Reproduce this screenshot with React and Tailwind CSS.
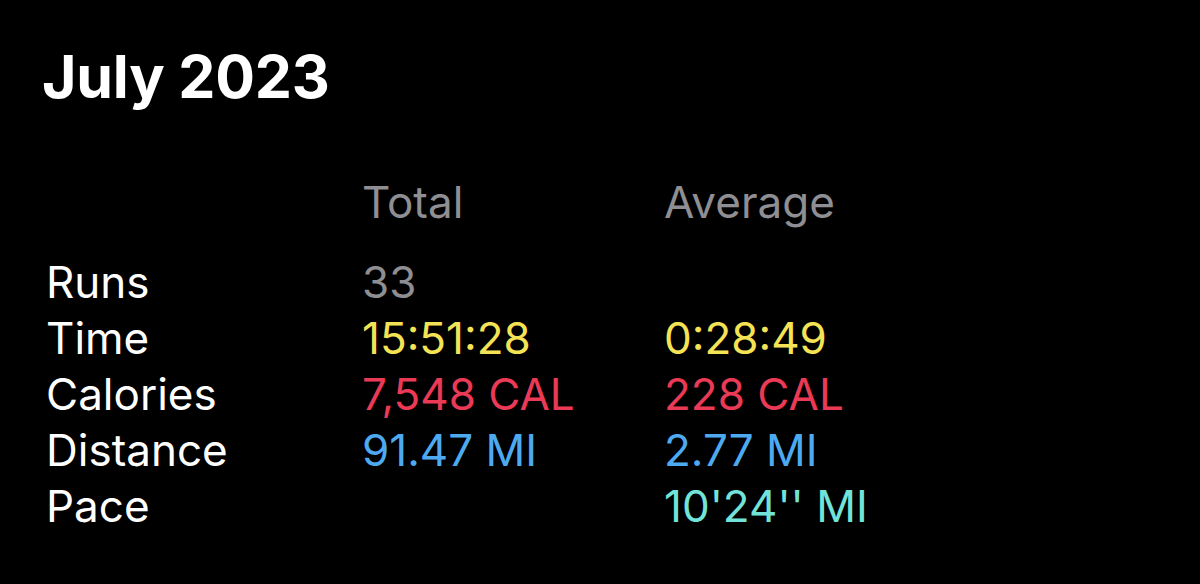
const rows = [
  { label: 'Runs', total: '33', avg: '', color: 'text-[#8e8e93]' },
  { label: 'Time', total: '15:51:28', avg: '0:28:49', color: 'text-[#f5e356]' },
  { label: 'Calories', total: '7,548 CAL', avg: '228 CAL', color: 'text-[#ea3a55]' },
  { label: 'Distance', total: '91.47 MI', avg: '2.77 MI', color: 'text-[#4eaaf0]' },
  { label: 'Pace', total: '', avg: "10'24'' MI", color: 'text-[#72e3d8]' },
];

export default function App() {
  return (
    <div
      className="w-[1200px] h-[584px] bg-black text-white overflow-hidden"
      style={{ fontFamily: 'Inter, "Noto Sans", sans-serif' }}
    >
      <h1 className="pl-[42px] pt-[46px] text-[59px] font-bold leading-[62px] tracking-[-0.2px]">July 2023</h1>

      <div className="pl-[46px] mt-[66px] text-[44px] leading-[56px]">
        <div className="grid grid-cols-[316px_302px_1fr] text-[#8e8e93] mb-[24px]">
          <div />
          <div>Total</div>
          <div>Average</div>
        </div>
        {rows.map(r => (
          <div key={r.label} className="grid grid-cols-[316px_302px_1fr]">
            <div>{r.label}</div>
            <div className={r.color}>{r.total}</div>
            <div className={r.label === 'Runs' ? '' : r.color}>{r.avg}</div>
          </div>
        ))}
      </div>
    </div>
  );
}
